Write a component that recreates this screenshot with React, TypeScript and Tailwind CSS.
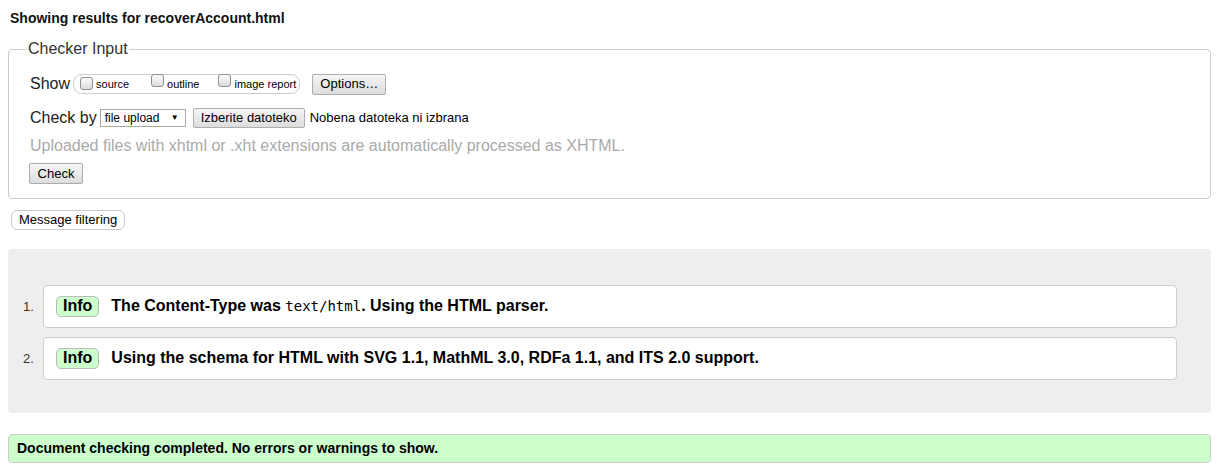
import React from "react";

function Checkbox() {
  return (
    <span className="inline-block w-[13px] h-[13px] border border-[#8f8f8f] rounded-[3px] bg-gradient-to-b from-[#fcfcfc] to-[#dcdcdc] -translate-y-[1px]" />
  );
}

function Btn({ children, className = "" }: { children: React.ReactNode; className?: string }) {
  return (
    <span
      className={
        "inline-flex items-center justify-center border border-[#adadad] rounded-[2px] bg-gradient-to-b from-[#f6f6f6] to-[#dddddd] text-[13px] text-black " +
        className
      }
    >
      {children}
    </span>
  );
}

const messages = [
  {
    n: 1,
    text: (
      <>
        The Content-Type was{" "}
        <code className="font-['DejaVu_Sans_Mono',monospace] font-normal text-[14px]">text/html</code>. Using the HTML
        parser.
      </>
    ),
  },
  {
    n: 2,
    text: <>Using the schema for HTML with SVG 1.1, MathML 3.0, RDFa 1.1, and ITS 2.0 support.</>,
  },
];

export default function App() {
  return (
    <div className="min-h-[472px] bg-white px-2 pt-[10px] text-black font-['Liberation_Sans',Arial,sans-serif]">
      <h2 className="ml-[2px] text-[14px] leading-[16px] font-bold text-[#111]">Showing results for recoverAccount.html</h2>

      <fieldset className="mt-[14px] border border-[#ccc] rounded-[4px] pl-[21px] pr-4 pb-[13px]">
        <legend className="-ml-[3px] px-[1px] text-[16px] leading-[18px] text-[#333]">Checker Input</legend>

        <div className="mt-[15px] flex items-center h-[22px]">
          <span className="text-[16px] text-[#222]">Show</span>
          <span className="ml-[3px] flex items-center h-[20px] border border-[#ccc] rounded-[9px] pl-[6px] pr-[3px] text-[11px]">
            <Checkbox />
            <span className="ml-[3px]">source</span>
            <span className="ml-[22px]">
              <Checkbox />
            </span>
            <span className="ml-[3px]">outline</span>
            <span className="ml-[19px]">
              <Checkbox />
            </span>
            <span className="ml-[3px]">image report</span>
          </span>
          <Btn className="ml-[12px] w-[74px] h-[21px]">Options…</Btn>
        </div>

        <div className="mt-[12px] flex items-center h-[22px]">
          <span className="text-[16px] text-[#222]">Check by</span>
          <span className="ml-[3px] flex items-center justify-between w-[86px] h-[18px] border border-[#a9a9a9] bg-white pl-[4px] pr-[6px] text-[12px]">
            file upload
            <span className="text-[8px]">▼</span>
          </span>
          <Btn className="ml-[7px] w-[112px] h-[20px]">Izberite datoteko</Btn>
          <span className="ml-[5px] text-[13px]">Nobena datoteka ni izbrana</span>
        </div>

        <p className="mt-[6px] text-[16px] leading-[22px] text-[#aaa]">
          Uploaded files with xhtml or .xht extensions are automatically processed as XHTML.
        </p>

        <Btn className="mt-[6px] -ml-[1px] w-[54px] h-[21px]">Check</Btn>
      </fieldset>

      <div className="mt-[11px] ml-[3px] flex">
        <span className="flex items-center h-[20px] px-[7px] border border-[#ccc] rounded-[6px] text-[13px]">
          Message filtering
        </span>
      </div>

      <div className="mt-[19px] bg-[#eee] rounded-[4px] pt-[36px] pb-[33px] pr-[34px]">
        <ol className="flex flex-col gap-[9px]">
          {messages.map((m) => (
            <li key={m.n} className="flex items-center">
              <span className="w-[35px] pl-[15px] text-[13px] text-[#333]">{m.n}.</span>
              <div className="flex-1 flex items-center h-[43px] bg-white border border-[#ccc] rounded-[4px] pl-[12px]">
                <span className="inline-flex items-center h-[21px] px-[6px] bg-[#ccffcc] border border-[#bbb] rounded-[5px] text-[16px] font-bold">
                  Info
                </span>
                <span className="ml-[12px] text-[16px] font-bold">{m.text}</span>
              </div>
            </li>
          ))}
        </ol>
      </div>

      <div className="mt-[21px] flex items-center h-[29px] bg-[#ccffcc] border border-[#ccc] rounded-[4px] pl-[8px] text-[14px] font-bold">
        Document checking completed. No errors or warnings to show.
      </div>
    </div>
  );
}
